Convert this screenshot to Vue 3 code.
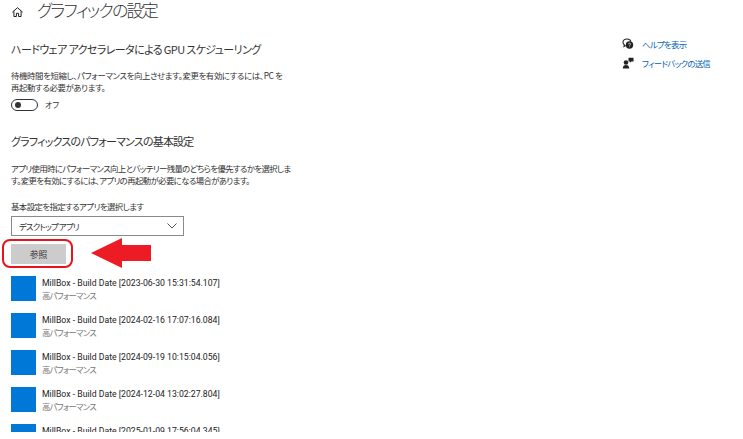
<script setup>
const apps = [
  '2023-06-30 15:31:54.107',
  '2024-02-16 17:07:16.084',
  '2024-09-19 10:15:04.056',
  '2024-12-04 13:02:27.804',
  '2025-01-09 17:56:04.345',
]
</script>

<template>
  <div class="page">
    <main class="main">
      <header class="title-row">
        <svg class="home" viewBox="0 0 11 10" width="11" height="10" fill="none" stroke="#222" stroke-width="1">
          <path d="M0.400 5.200 5.500 0.700l5.100 4.500M1.900 4.200v5.300h2.500V6.300h2.200v3.200h2.500V4.200" />
        </svg>
        <h1>グラフィックの設定</h1>
      </header>

      <h2 class="gpu-head">ハードウェア アクセラレータによる GPU スケジューリング</h2>
      <p class="desc gpu-desc">待機時間を短縮し、パフォーマンスを向上させます。変更を有効にするには、PC を<br>再起動する必要があります。</p>
      <div class="toggle-row">
        <span class="toggle"><span class="knob"></span></span>
        <span class="toggle-label">オフ</span>
      </div>

      <h2 class="perf-head">グラフィックスのパフォーマンスの基本設定</h2>
      <p class="desc perf-desc">アプリ使用時にパフォーマンス向上とバッテリー残量のどちらを優先するかを選択しま<br>す。変更を有効にするには、アプリの再起動が必要になる場合があります。</p>
      <label class="pick-label">基本設定を指定するアプリを選択します</label>
      <div class="select">
        <span>デスクトップ アプリ</span>
        <svg viewBox="0 0 10 6" width="10" height="6" fill="none" stroke="#555" stroke-width="1">
          <path d="M0.500 0.500 5 5l4.500-4.500" />
        </svg>
      </div>
      <div class="browse-wrap">
        <button class="browse">参照</button>
        <span class="ring"></span>
        <svg class="arrow" viewBox="0 0 60 30" width="60" height="30">
          <path d="M0 15 31 0v7h29v16H31v7z" fill="#ed1c24" />
        </svg>
      </div>

      <ul class="apps">
        <li v-for="date in apps" :key="date" class="app">
          <span class="tile"></span>
          <div class="app-text">
            <div class="app-name">MillBox - Build Date [{{ date }}]</div>
            <div class="app-sub">高パフォーマンス</div>
          </div>
        </li>
      </ul>
    </main>

    <aside class="side">
      <a class="link">
        <svg viewBox="0 0 12 12" width="12" height="12">
          <path d="M5 1C2.600 1 1 2.500 1 4.300c0 1 .500 1.900 1.300 2.500L2 8.500l1.800-1" fill="none" stroke="#222" stroke-width="1.100" />
          <path d="M5 1c2 0 3.500 1 3.900 2.500" fill="none" stroke="#222" stroke-width="1.100" />
          <circle cx="7.500" cy="7" r="3.700" fill="#222" />
          <path d="M6.400 6.200c0-1.400 2.200-1.400 2.200 0 0 .800-1.100.700-1.100 1.500M7.500 8.500v.700" fill="none" stroke="#fff" stroke-width=".700" />
        </svg>
        <span>ヘルプを表示</span>
      </a>
      <a class="link">
        <svg viewBox="0 0 12 12" width="12" height="12" fill="#222">
          <circle cx="4" cy="5.500" r="2.300" />
          <path d="M0.800 11.500c0-2.300 1.300-3.400 3.200-3.400s3.200 1.100 3.200 3.400z" />
          <path d="M6.500 0.800h5v3.700H9.300L8 5.700V4.500H6.500z" />
        </svg>
        <span>フィードバックの送信</span>
      </a>
    </aside>
  </div>
</template>

<style scoped>
.page {
  position: relative;
  display: flex;
  justify-content: space-between;
  width: 743px;
  height: 432px;
  overflow: hidden;
  background: #fff;
  color: #1a1a1a;
  font-family: "Noto Sans CJK JP", "Noto Sans", sans-serif;
  font-feature-settings: "palt";
}

.main {
  width: 290px;
  padding-left: 11px;
}

.title-row {
  display: flex;
  align-items: center;
  height: 20px;
}

.home {
  flex: none;
  margin: 4px 0 0 1px;
}

h1 {
  margin: 0 0 0 14px;
  font-size: 17px;
  font-weight: 300;
  line-height: 20px;
  letter-spacing: -1.800px;
  color: #333;
}

h2 {
  margin: 0;
  font-size: 11px;
  font-weight: 400;
  line-height: 16px;
  color: #333;
  white-space: nowrap;
}

.gpu-head {
  margin-top: 21px;
  letter-spacing: -0.600px;
}

.desc {
  margin: 0;
  font-size: 8.400px;
  line-height: 12px;
  letter-spacing: -0.350px;
  color: #333;
  white-space: nowrap;
}

.gpu-desc {
  margin-top: 12px;
}

.toggle-row {
  display: flex;
  align-items: center;
  gap: 7px;
  height: 13px;
  margin-top: 5px;
}

.toggle {
  display: flex;
  align-items: center;
  box-sizing: border-box;
  width: 27px;
  height: 12px;
  padding-left: 3px;
  border: 1.500px solid #333;
  border-radius: 6px;
}

.knob {
  width: 6px;
  height: 6px;
  border-radius: 50%;
  background: #333;
}

.toggle-label {
  font-size: 8px;
  color: #333;
}

.perf-head {
  margin-top: 22px;
  letter-spacing: -0.800px;
}

.perf-desc {
  margin-top: 13px;
  letter-spacing: -0.600px;
}

.pick-label {
  display: block;
  margin-top: 14px;
  font-size: 8.400px;
  line-height: 12px;
  letter-spacing: -0.550px;
  color: #333;
}

.select {
  display: flex;
  align-items: center;
  justify-content: space-between;
  box-sizing: border-box;
  width: 173px;
  height: 20px;
  margin-top: 4px;
  padding: 0 6px 0 7px;
  border: 1px solid #8a8a8a;
  font-size: 8.400px;
  letter-spacing: -0.800px;
  color: #333;
}

.browse-wrap {
  position: relative;
  margin-top: 8px;
  height: 20px;
}

.browse {
  display: block;
  width: 55px;
  height: 20px;
  padding: 0;
  border: 0;
  background: #ccc;
  font-family: inherit;
  font-size: 8.800px;
  color: #333;
}

.ring {
  position: absolute;
  left: -9px;
  top: -5px;
  width: 71px;
  height: 29px;
  border: 2.500px solid #e8141c;
  border-radius: 8px;
  box-sizing: border-box;
}

.arrow {
  position: absolute;
  left: 80px;
  top: -6px;
}

.apps {
  margin: 12px 0 0;
  padding: 0;
  list-style: none;
}

.app {
  display: flex;
  gap: 6px;
  height: 25px;
  margin-bottom: 12px;
}

.tile {
  flex: none;
  width: 25px;
  height: 25px;
  background: #0078d7;
}

.app-text {
  margin-top: 1px;
}

.app-name {
  font-family: Roboto, "Noto Sans CJK JP", sans-serif;
  font-size: 8.700px;
  font-weight: 400;
  line-height: 12px;
  color: #222;
  white-space: nowrap;
}

.app-sub {
  font-size: 8.400px;
  line-height: 12px;
  letter-spacing: -0.800px;
  color: #777;
}

.side {
  display: flex;
  flex-direction: column;
  gap: 7px;
  width: 121px;
  padding-top: 38px;
}

.link {
  display: flex;
  align-items: center;
  gap: 8px;
  height: 12px;
  font-size: 8.400px;
  letter-spacing: -0.700px;
  color: #0063b1;
}
</style>

<style>
html, body { background: #fff; }
</style>
